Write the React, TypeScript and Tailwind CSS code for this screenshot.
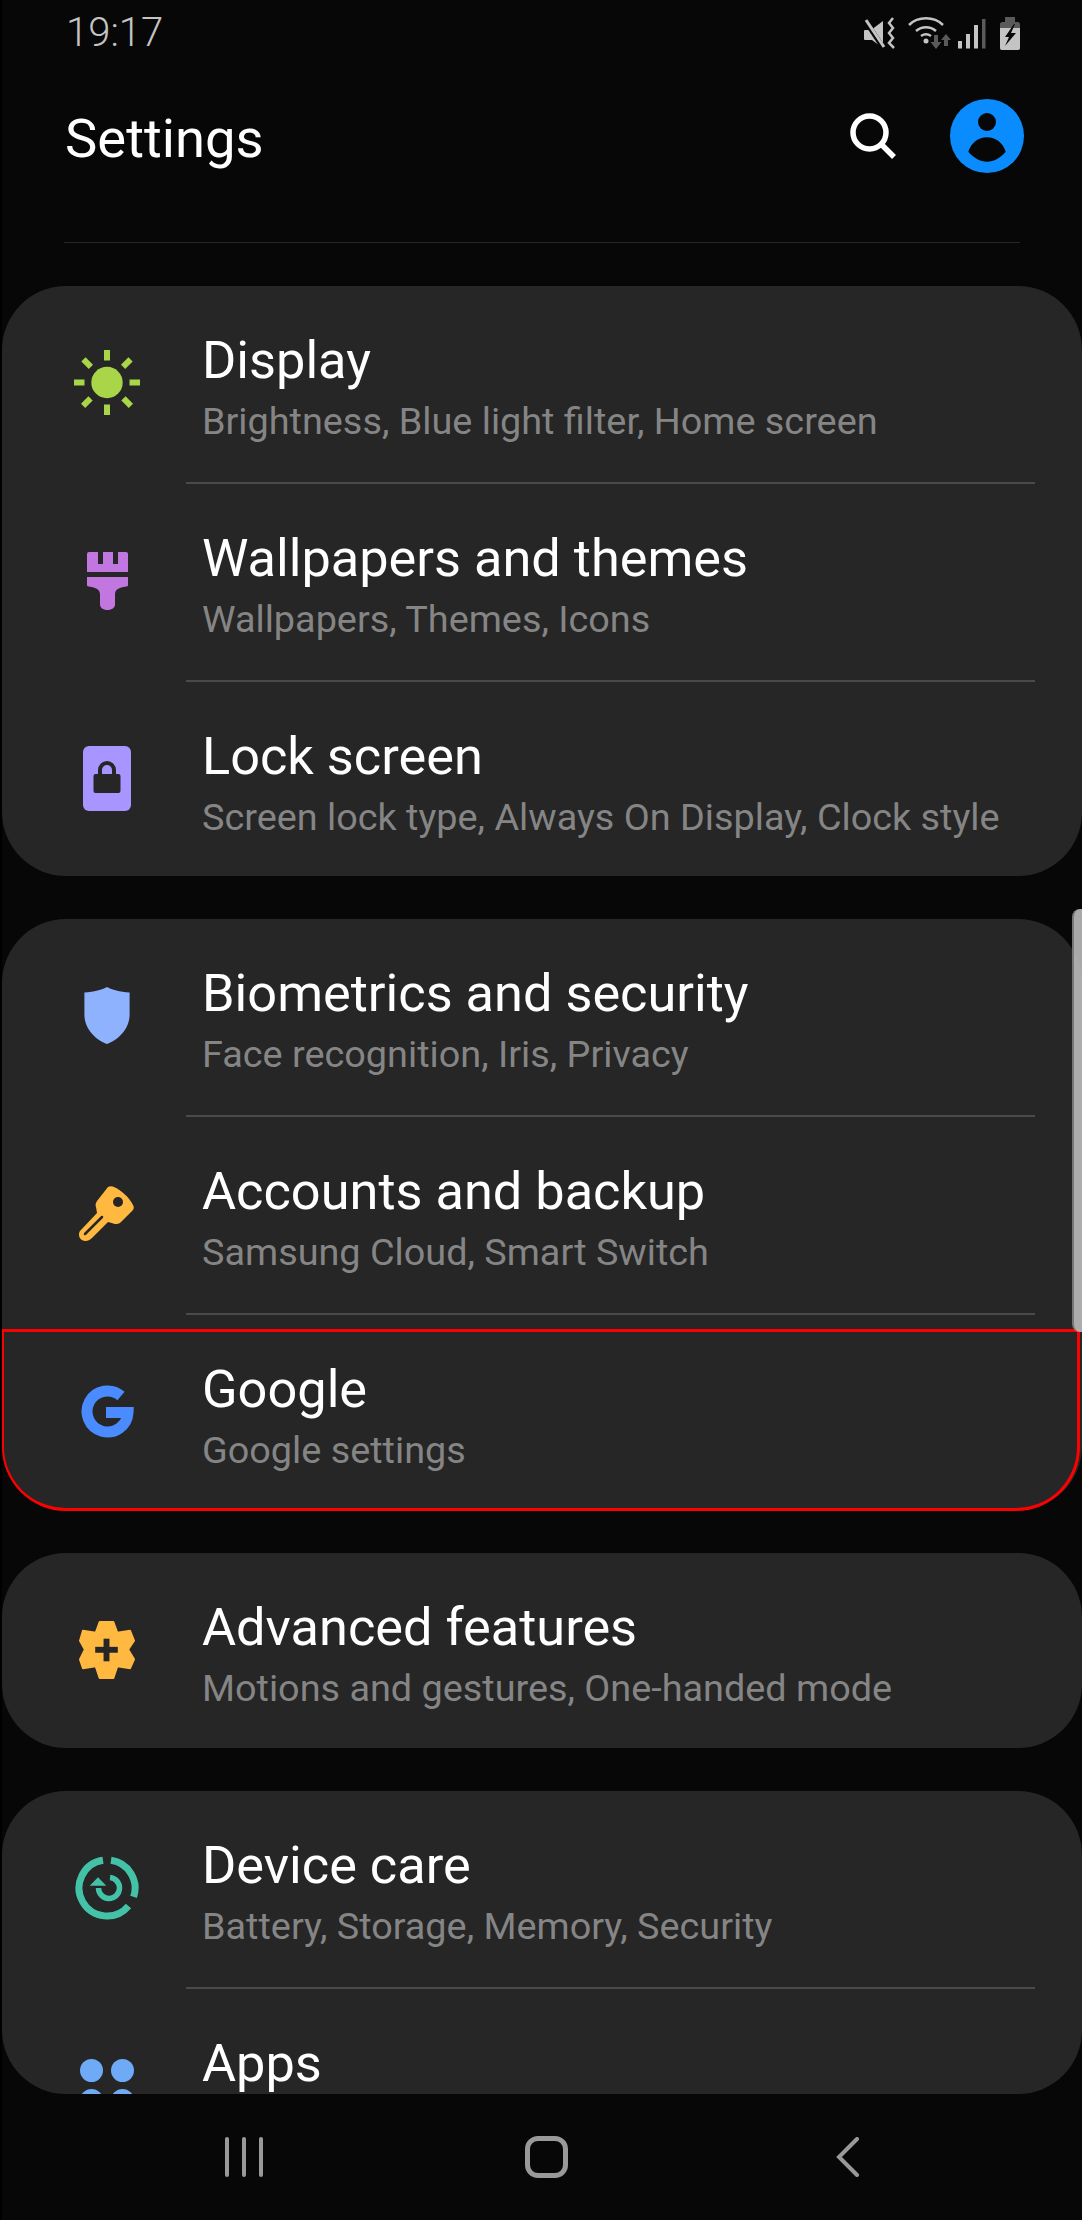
import type { ReactNode } from "react";

function Sun() {
	return (
		<svg width="66" height="65" viewBox="0 0 66 65" fill="#a8d648">
			<circle cx="33" cy="32.500" r="15.700" />
			<rect x="30" y="0" width="6" height="10.500" />
			<rect x="30" y="54.500" width="6" height="10.500" />
			<rect x="0" y="29.500" width="10.500" height="6" />
			<rect x="55.500" y="29.500" width="10.500" height="6" />
			<rect x="10" y="8" width="6" height="10.500" transform="rotate(-45 13 13)" />
			<rect x="50" y="8" width="6" height="10.500" transform="rotate(45 53 13)" />
			<rect x="10" y="47" width="6" height="10.500" transform="rotate(45 13 52)" />
			<rect x="50" y="47" width="6" height="10.500" transform="rotate(-45 53 52)" />
		</svg>
	);
}

function Brush() {
	return (
		<svg width="41" height="58" viewBox="0 0 41 58" fill="#c277e0">
			<path d="M0 2a2 2 0 0 1 2-2h9v12h5V0h10v12h5V0h8a2 2 0 0 1 2 2v18H0z" />
			<path d="M0 25h41v8c0 1-1 1.500-2 1.500-7 1-11 3-11 8v10c0 3-3 5.500-7.500 5.500S13 55.500 13 52.500v-10c0-5-4-7-11-8-1 0-2-.5-2-1.500z" />
		</svg>
	);
}

function LockCard() {
	return (
		<svg width="48" height="65" viewBox="0 0 48 65">
			<rect width="48" height="65" rx="6" fill="#a995ff" />
			<path d="M15 29v-5a9 9 0 0 1 18 0v5h-4v-5a5 5 0 0 0-10 0v5z" fill="#262626" />
			<rect x="10.500" y="28" width="27" height="19" rx="2" fill="#262626" />
		</svg>
	);
}

function Shield() {
	return (
		<svg width="46" height="57" viewBox="0 0 46 58" fill="#8fb2ff">
			<path d="M23 0c5 3 13 5 23 5.500V28c0 15-12 26-23 30C12 54 0 43 0 28V5.500C10 5 18 3 23 0z" />
		</svg>
	);
}

function KeyIcon() {
	return (
		<svg width="56" height="56" viewBox="0 0 56 56">
			<path
				d="M29 1c2-1 4-1 6 0 7 3 15 10 19 18 1 2 1 3 0 5L42 36c-2 2-4 2-6 2l-7-2L13 52c-3 3-7 4-10 2s-4-6-2-9L18 27l-1-6c-1-2 0-4 1-6z"
				fill="#ffb840"
			/>
			<circle cx="39" cy="16" r="5" fill="#262626" />
			<path d="M6 48 L23 31" stroke="#262626" strokeWidth="2.500" strokeLinecap="round" />
		</svg>
	);
}

function GoogleG() {
	return (
		<svg width="53" height="53" viewBox="0 0 53 53" fill="none" stroke="#4a8cff" strokeWidth="11">
			<path d="M40 11A20.500 20.500 0 1 0 47 27.600H25" />
		</svg>
	);
}

function GearPlus() {
	return (
		<svg width="56" height="58" viewBox="-1 -1 57 59">
			<polygon
				points="20,0 34,0 38,11 51,9 55,19 49,28 55,38 51,47 38,45 34,57 20,57 16,45 3,47 0,38 5,28 0,19 3,9 16,11"
				fill="#ffb840"
				stroke="#ffb840"
				strokeWidth="2"
				strokeLinejoin="round"
			/>
			<rect x="15.500" y="25.300" width="23" height="6" fill="#262626" />
			<rect x="24" y="17" width="6" height="23" fill="#262626" />
		</svg>
	);
}

function CareIcon() {
	return (
		<svg width="64" height="64" viewBox="0 0 64 64" fill="none" stroke="#43c2a8">
			<path d="M28 4.300A28 28 0 1 0 53.500 50" strokeWidth="7" />
			<path d="M36 4.300A28 28 0 0 1 58.600 40.900" strokeWidth="7" />
			<path d="M35 21.500A10.500 10.500 0 1 1 23.500 32" strokeWidth="5.500" />
			<path d="M14.700 29.700L23 21.300l8.300 8.400z" fill="#43c2a8" stroke="none" />
		</svg>
	);
}

function AppsDots() {
	return (
		<div className="grid w-[54px] grid-cols-2 gap-x-[8px] gap-y-[7px]">
			<div className="h-[23px] w-[23px] rounded-full bg-[#6eaaf5]" />
			<div className="h-[23px] w-[23px] rounded-full bg-[#6eaaf5]" />
			<div className="h-[23px] w-[23px] rounded-full bg-[#6eaaf5]" />
			<div className="h-[23px] w-[23px] rounded-full bg-[#6eaaf5]" />
		</div>
	);
}

function StatusIcons() {
	return (
		<svg width="156" height="33" viewBox="0 0 156 33" fill="#c4c4c4">
			{/* vibrate mute */}
			<path d="M1 13h6L19 4v27L8 23H1c-1 0-1-1-1-1v-8s0-1 1-1z" />
			<path d="M0 2l20 30" stroke="#070707" strokeWidth="5" />
			<path d="M2 3l18 27" stroke="#c4c4c4" strokeWidth="3" />
			<path d="M29 1l-4 5 4 5-4 5 4 5-4 5 5 5" fill="none" stroke="#c4c4c4" strokeWidth="2.500" />
			{/* wifi */}
			<g fill="none" stroke="#c4c4c4" strokeWidth="2.500">
				<path d="M45 8c9-9 25-9 34 0" />
				<path d="M52 14c6-5 14-5 20 0" />
				<path d="M57 19c3-2 7-2 10 0" />
			</g>
			<circle cx="62" cy="24" r="2.500" />
			<path d="M70 18h4v7h3.500l-5.500 7-5.500-7H70z" fill="#5a5a5a" />
			<path d="M82 17l5 6h-3v6h-4v-6h-3z" fill="#5a5a5a" />
			{/* signal */}
			<rect x="94" y="24" width="4" height="7.500" />
			<rect x="102" y="17" width="4" height="14.500" />
			<rect x="110" y="8" width="4" height="23.500" />
			<rect x="118" y="2" width="3.500" height="29.500" fill="#5a5a5a" />
			{/* battery */}
			<path d="M141 0h10v5h3c1 0 2 1 2 2v24c0 1-1 2-2 2h-16c-1 0-2-1-2-2V7c0-1 1-2 2-2h3z" fill="#5a5a5a" />
			<path d="M136 11h20v20c0 1-1 2-2 2h-16c-1 0-2-1-2-2z" />
			<path d="M150 7l-9 13h4l-4 9 11-13h-5l4-9z" fill="#070707" />
		</svg>
	);
}

function Row({ icon, title, sub, divider }: { icon: ReactNode; title: string; sub?: string; divider?: boolean }) {
	return (
		<div className="relative flex h-[198px] shrink-0 items-start">
			<div className="flex h-[193px] w-[212px] shrink-0 items-center justify-center pr-[2px]">{icon}</div>
			<div className="-ml-[12px] pt-[44px]">
				<div className="text-[52.300px] leading-[60px] whitespace-nowrap text-white">{title}</div>
				{sub && <div className="mt-[9px] text-[37.800px] leading-[44px] whitespace-nowrap text-[#858585]">{sub}</div>}
			</div>
			{divider && <div className="absolute bottom-0 left-[184px] right-[47px] h-[2px] bg-[#4a4a4a]" />}
		</div>
	);
}

export default function App() {
	return (
		<div className="relative h-[2220px] w-[1082px] overflow-hidden bg-black pl-[2px] font-['Roboto',sans-serif]">
			<div className="flex h-full flex-col bg-[#070707]">
				<div className="flex h-[68px] shrink-0 items-center justify-between pb-[2px] pl-[64px] pr-[62px]">
					<span className="text-[40px] leading-[48px] font-light text-[#c4c4c4]">19:17</span>
					<StatusIcons />
				</div>
				<div className="flex h-[136px] shrink-0 items-center justify-between pl-[63px] pr-[58px]">
					<span className="mt-[5px] text-[54.400px] leading-[64px] text-white">Settings</span>
					<div className="flex items-center gap-[54px]">
						<svg width="46" height="46" viewBox="0 0 46 46" fill="none" stroke="#fff" strokeWidth="5.500">
							<circle cx="19.500" cy="19.500" r="16.500" />
							<path d="M31 31l13 13" />
						</svg>
						<svg width="74" height="74" viewBox="0 0 74 74">
							<circle cx="37" cy="37" r="37" fill="#0a8cff" />
							<circle cx="37" cy="23" r="9" fill="#070707" />
							<path d="M18.300 52.700c3-9 10-14.400 18.700-14.400s15.700 5.400 18.700 14.400c-5 6-12 10-18.700 10s-13.700-4-18.700-10z" fill="#070707" />
						</svg>
					</div>
				</div>
				<div className="mx-[62px] mt-[38px] h-px shrink-0 bg-[#262626]" />

				<div className="mt-[43px] flex flex-1 flex-col gap-[43px] overflow-hidden">
					<section className="h-[590px] shrink-0 overflow-hidden rounded-[64px] bg-[#262626]">
						<Row icon={<Sun />} title="Display" sub="Brightness, Blue light filter, Home screen" divider />
						<Row icon={<Brush />} title="Wallpapers and themes" sub="Wallpapers, Themes, Icons" divider />
						<Row icon={<LockCard />} title="Lock screen" sub="Screen lock type, Always On Display, Clock style" />
					</section>
					<section className="h-[591px] shrink-0 overflow-hidden rounded-[64px] bg-[#262626]">
						<Row icon={<Shield />} title="Biometrics and security" sub="Face recognition, Iris, Privacy" divider />
						<Row icon={<KeyIcon />} title="Accounts and backup" sub="Samsung Cloud, Smart Switch" divider />
						<Row icon={<GoogleG />} title="Google" sub="Google settings" />
					</section>
					<section className="h-[195px] shrink-0 overflow-hidden rounded-[64px] bg-[#262626]">
						<Row icon={<GearPlus />} title="Advanced features" sub="Motions and gestures, One-handed mode" />
					</section>
					<section className="h-[303px] shrink-0 overflow-hidden rounded-[64px] bg-[#262626]">
						<Row icon={<CareIcon />} title="Device care" sub="Battery, Storage, Memory, Security" divider />
						<Row icon={<AppsDots />} title="Apps" />
					</section>
				</div>

				<div className="flex h-[126px] shrink-0 items-start pl-[223px] pt-[42px]">
					<div className="flex gap-[13px] pt-[1px]">
						<div className="h-[40px] w-[4px] rounded-full bg-[#999]" />
						<div className="h-[40px] w-[4px] rounded-full bg-[#999]" />
						<div className="h-[40px] w-[4px] rounded-full bg-[#999]" />
					</div>
					<div className="ml-[262px] h-[42px] w-[43px] rounded-[13px] border-[5px] border-[#999]" />
					<svg className="ml-[268px] mt-[1px]" width="24" height="40" viewBox="0 0 24 40" fill="none" stroke="#999" strokeWidth="4" strokeLinecap="round">
						<path d="M21 2L3 20l18 18" />
					</svg>
				</div>
			</div>

			{/* red highlight and scrollbar sit over the list */}
			<div className="absolute left-[2px] top-[1329px] h-[182px] w-[1078px] rounded-b-[64px] border-[3px] border-l-[2px] border-[#f00]" />
			<div className="absolute right-0 top-[909px] h-[423px] w-[10px] rounded-l-[8px] border-l-[2px] border-[#777] bg-[#bbb]/90" />
		</div>
	);
}
